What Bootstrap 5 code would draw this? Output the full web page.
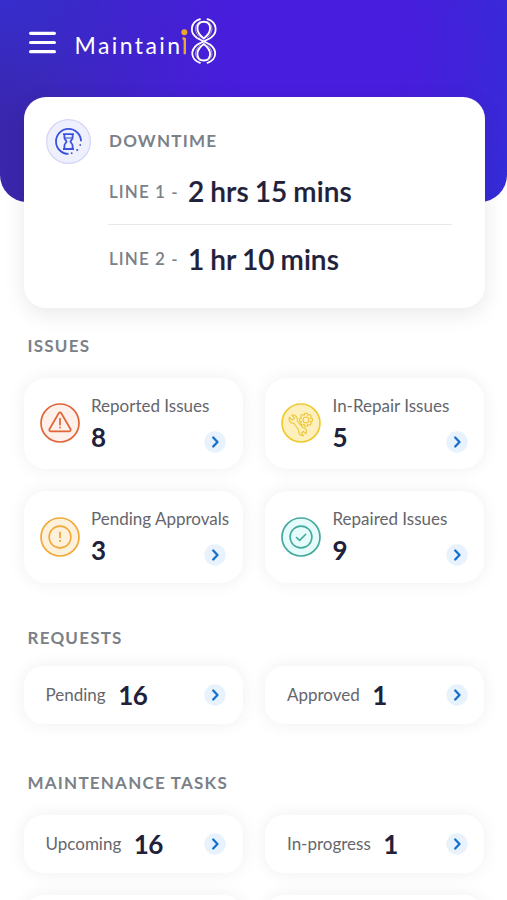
<!DOCTYPE html>
<html lang="en">
<head>
<meta charset="utf-8">
<meta name="viewport" content="width=device-width, initial-scale=1">
<title>Maintaini8</title>
<link href="https://cdn.jsdelivr.net/npm/bootstrap@5.3.0/dist/css/bootstrap.min.css" rel="stylesheet">
<style>
body{font-family:Lato,"Liberation Sans",sans-serif;background:#fff;color:#20213a}
.screen{height:900px}
.hero{height:202px;border-radius:0 0 27px 27px;padding:17px 0 0 29px;background:radial-gradient(ellipse 280px 330px at 320px 50px,#481ddd 0,#481ddd 30%,rgba(72,29,221,0) 100%),radial-gradient(ellipse 260px 130px at 0 0,#372dce 0,rgba(55,45,206,0) 100%),linear-gradient(90deg,#3a26aa 0,#3d27c4 50%,#2b33d6 100%)}
.menu-btn{width:27px;height:52px;border:0;background:none;padding:0}
.logo{width:146px;height:52px;margin-left:17px}
.main-area{padding:0 22.5px 0 23.5px;margin-top:-105.5px}
.panel{border:0;border-radius:22px;background:#fff}
.downtime{height:211.5px;box-shadow:0 6px 22px rgba(0,0,0,.09);padding:22.5px 32.5px 0 22px}
.round-icon{width:45px;height:45px}
.caps{font-size:17px;line-height:20px;font-weight:700;letter-spacing:1.22px;color:#7b8188}
.down-body{margin-left:17.5px;padding-top:12px}
.down-title{padding:0 0 7px 1px}
.line-row{height:67.5px;padding-left:1px}
.line-row .caps{font-weight:600;letter-spacing:1.05px;width:79px;padding-top:1px}
.line-row:not(:last-child){height:67px;border-bottom:1.5px solid #e7e8ea}
.span-time{font-size:28px;line-height:34px;font-weight:600;-webkit-text-stroke:.2px;white-space:nowrap;word-spacing:-1px;letter-spacing:.06px}
.sec-title{margin-left:4px}
#issues{margin-top:28px;margin-bottom:21.5px}
#requests{margin-top:45px;margin-bottom:18px}
#tasks{margin-top:49px;margin-bottom:21.5px}
.tiles{display:grid;grid-template-columns:219px 219px;column-gap:22.5px;row-gap:22px}
.tile{box-shadow:0 0 18px rgba(0,0,0,.065);text-decoration:none;color:inherit}
.issue{height:91.5px;padding:0 16.5px 0 16px}
.issue-icon{width:40px;height:40px;flex:none}
.issue-text{margin-left:11.5px;flex:1 1 0;min-width:0;white-space:nowrap;padding-top:18px}
.t-label{font-size:17px;line-height:20px;color:#65666d}
.t-count{font-size:26px;line-height:30px;font-weight:700}
.issue .t-count{margin-top:6px}
.go{width:22px;height:22px;flex:none}
.issue .go{margin-bottom:16.5px}
.short{height:58.5px;border-radius:19px;padding:0 16.5px 0 22px}
.short .t-label{padding-top:1px}
.short .t-count{margin-left:12.5px;letter-spacing:-.5px}
</style>
<script src="https://cdn.jsdelivr.net/npm/bootstrap@5.3.0/dist/js/bootstrap.bundle.min.js"></script>
</head>
<body>
<svg class="d-none">
  <symbol id="go" viewBox="0 0 22 22"><circle cx="11" cy="11" r="10.700" fill="#e8f2fc"/><path d="M9.200 6.500 13.500 11 9.200 15.500" fill="none" stroke="#1470d0" stroke-width="2.300" stroke-linecap="round" stroke-linejoin="round"/></symbol>
</svg>
<div class="screen overflow-hidden">
<header class="hero d-flex align-items-start">
  <button class="menu-btn d-flex align-items-center" aria-label="Menu"><svg width="27" height="24" viewBox="0 0 27 24" stroke="#fff" stroke-width="3.200" stroke-linecap="round"><path d="M1.600 2.300H25.400M1.600 11.500H25.400M1.600 20.700H25.400"/></svg></button>
  <svg class="logo" viewBox="73 17 146 52" role="img">
    <text x="74.500" y="54.300" font-family="Lato" font-size="23" fill="#fff" textLength="105.500">Maintain</text>
    <circle cx="184.300" cy="32.300" r="3" fill="#e9a92c"/><path d="M184.800 38V54.200M182.500 38.500h2.300" stroke="#e9a92c" stroke-width="2.400" fill="none"/>
    <g fill="none" stroke-linecap="round">
      <path d="M200 19.200C190 22.500 189.500 33 197 38L210 44.500C217.500 50 217 59.500 207.500 62.800M207.500 19.200C217.500 22.500 218 33 210.500 38L197.500 44.500C190 50 190.500 59.500 200 62.800" stroke="#fff" stroke-width="1.800"/>
      <path d="M203.750 21.800C199.300 21.800 197.400 24.800 197.400 28.300C197.400 33 200.500 36 203.750 38.500C207 36 210.100 33 210.100 28.300C210.100 24.800 208.200 21.800 203.750 21.800ZM203.750 60.500C199.300 60.500 197.400 57.500 197.400 54C197.400 49.500 200.500 46.500 203.750 44C207 46.500 210.100 49.500 210.100 54C210.100 57.500 208.200 60.500 203.750 60.500Z" stroke="#fff" stroke-width="1.900"/>
      <path d="M200 21.500C193.500 25 194.500 33 200 37.500M207.500 21.500C214 25 213 33 207.500 37.500M200 60.500C193.500 57 194.500 50 200 45M207.500 60.500C214 57 213 50 207.500 45" stroke="#c9bd9f" stroke-width=".9"/>
    </g>
  </svg>
</header>
<main class="main-area">
  <section class="panel downtime d-flex align-items-start">
    <svg class="round-icon flex-shrink-0" viewBox="0 0 45 45"><circle cx="22.500" cy="22.500" r="21.900" fill="#eef0fd" stroke="#d8d4f6" stroke-width="1.200"/><g fill="none" stroke="#3b52df" stroke-width="1.800"><path d="M22.500 34.900A12.500 12.500 0 1 1 35 22.300"/><path d="M17 15.200H28M17 30H28M18.400 15.500V18.500C18.400 20.700 20.500 21.400 20.500 22.600S18.400 24.500 18.400 26.700V29.700M26.600 15.500V18.500C26.600 20.700 24.500 21.400 24.500 22.600S26.600 24.500 26.600 26.700V29.700"/><path d="M19 19H26" stroke-width="1.100"/></g><g fill="#3b52df"><circle cx="34.200" cy="26" r=".9"/><circle cx="31.200" cy="31" r="1.100"/><circle cx="25.700" cy="34.200" r=".9"/></g></svg>
    <div class="down-body flex-grow-1">
      <div class="caps down-title">DOWNTIME</div>
      <div class="line-row d-flex align-items-center"><span class="caps">LINE 1 -</span><span class="span-time">2 hrs 15 mins</span></div>
      <div class="line-row d-flex align-items-center"><span class="caps">LINE 2 -</span><span class="span-time">1 hr 10 mins</span></div>
    </div>
  </section>

  <h2 class="sec-title caps" id="issues">ISSUES</h2>
  <div class="tiles">
    <a class="panel tile issue d-flex align-items-center" href="#">
      <svg class="issue-icon" viewBox="0 0 40 40"><circle cx="20" cy="20" r="19" fill="#fff0ec" stroke="#df6538" stroke-width="1.700"/><g fill="none" stroke="#df6538" stroke-width="1.700" stroke-linejoin="round" stroke-linecap="round"><path d="M18.700 10.300Q20 8.300 21.300 10.300L30.600 26.200Q31.200 28.100 29.300 28.300H10.700Q8.800 28.100 9.400 26.200Z"/><path d="M20 15.500V21.700M20 24.300V24.600"/></g></svg>
      <div class="issue-text align-self-start"><div class="t-label">Reported Issues</div><div class="t-count">8</div></div>
      <svg class="go ms-auto align-self-end"><use href="#go"/></svg>
    </a>
    <a class="panel tile issue d-flex align-items-center" href="#">
      <svg class="issue-icon" viewBox="0 0 40 40"><circle cx="20" cy="20" r="19" fill="#fdf0bd" stroke="#f0c92f" stroke-width="1.700"/><g fill="none" stroke="#ecc63a" stroke-width="1.100" stroke-linejoin="round"><path d="M8.200 14.200 11.500 17.200 13.500 15.200 10.600 12.200C14 11.400 17 14 16.300 17.800L21.500 24.500C25 24.300 26.500 28 24.800 31L22.300 28.300 20.300 30 22.600 32.600C18.500 33 17 30 17.700 27L12.800 20.300C9.500 20.500 7.500 17.500 8.200 14.200Z"/><circle cx="25" cy="17" r="3"/><path d="M23.800 10.400h2.400l.6 1.900 1.800-.9 1.700 1.700-.9 1.800 2 .7v2.500l-2 .7.900 1.800-1.700 1.700-1.800-.9-.6 1.900h-2.400l-.7-1.900-1.800.9-1.700-1.700.9-1.800-2-.7v-2.500l2-.7-.9-1.800 1.700-1.700 1.800.9Z"/></g></svg>
      <div class="issue-text align-self-start"><div class="t-label">In-Repair Issues</div><div class="t-count">5</div></div>
      <svg class="go ms-auto align-self-end"><use href="#go"/></svg>
    </a>
    <a class="panel tile issue d-flex align-items-center" href="#">
      <svg class="issue-icon" viewBox="0 0 40 40"><circle cx="20" cy="20" r="19" fill="#fef1dc" stroke="#f1a93a" stroke-width="1.700"/><g fill="none" stroke="#f1a93a" stroke-width="1.600"><circle cx="20" cy="20" r="10.900"/><path d="M20 14.700V21M20 23V24.800" stroke-width="1.900"/></g></svg>
      <div class="issue-text align-self-start"><div class="t-label">Pending Approvals</div><div class="t-count">3</div></div>
      <svg class="go ms-auto align-self-end"><use href="#go"/></svg>
    </a>
    <a class="panel tile issue d-flex align-items-center" href="#">
      <svg class="issue-icon" viewBox="0 0 40 40"><circle cx="20" cy="20" r="19" fill="#e6fcfa" stroke="#45a99e" stroke-width="1.700"/><g fill="none" stroke="#45a99e" stroke-width="1.600" stroke-linecap="round" stroke-linejoin="round"><circle cx="20" cy="20" r="10.900"/><path d="M15.500 20.500 18.700 23.400 24.700 17.300"/></g></svg>
      <div class="issue-text align-self-start"><div class="t-label">Repaired Issues</div><div class="t-count">9</div></div>
      <svg class="go ms-auto align-self-end"><use href="#go"/></svg>
    </a>
  </div>

  <h2 class="sec-title caps" id="requests">REQUESTS</h2>
  <div class="tiles">
    <a class="panel tile short d-flex align-items-center" href="#"><span class="t-label">Pending</span><span class="t-count">16</span><svg class="go ms-auto"><use href="#go"/></svg></a>
    <a class="panel tile short d-flex align-items-center" href="#"><span class="t-label">Approved</span><span class="t-count">1</span><svg class="go ms-auto"><use href="#go"/></svg></a>
  </div>

  <h2 class="sec-title caps" id="tasks">MAINTENANCE TASKS</h2>
  <div class="tiles">
    <a class="panel tile short d-flex align-items-center" href="#"><span class="t-label">Upcoming</span><span class="t-count">16</span><svg class="go ms-auto"><use href="#go"/></svg></a>
    <a class="panel tile short d-flex align-items-center" href="#"><span class="t-label">In-progress</span><span class="t-count">1</span><svg class="go ms-auto"><use href="#go"/></svg></a>
    <a class="panel tile short" href="#" aria-label="More tasks"></a>
    <a class="panel tile short" href="#" aria-label="More tasks"></a>
  </div>
</main>
</div>
</body>
</html>
